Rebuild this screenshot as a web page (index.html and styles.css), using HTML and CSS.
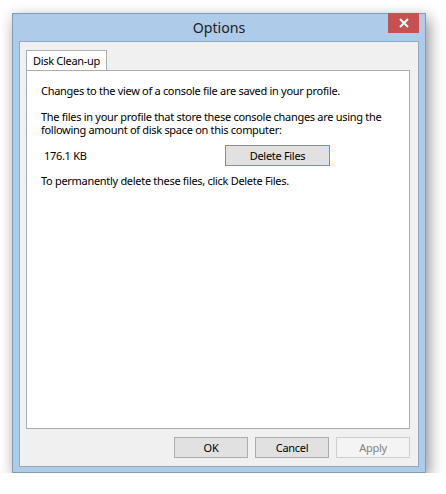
FILE: index.html
```html
<!DOCTYPE html>
<html lang="en">
<head>
  <meta charset="UTF-8" />
  <title>Options</title>
  <link rel="stylesheet" href="styles.css">
</head>
<body>

  <div class="window">
    <div class="titlebar">
      <span class="title">Options</span>
    </div>
    <button class="close" aria-label="Close">
      <svg width="10" height="10" viewBox="0 0 10 10">
        <path d="M1 1 L9 9 M9 1 L1 9" stroke="#fff" stroke-width="2" fill="none"/>
      </svg>
    </button>

    <div class="client">
      <div class="tabs">
        <div class="tab">Disk Clean-up</div>
      </div>

      <div class="panel">
        <p>Changes to the view of a console file are saved in your profile.</p>
        <p>The files in your profile that store these console changes are using the following amount of disk space on this computer:</p>
        <div class="usage">
          <span class="amount">176.1 KB</span>
          <button class="btn btn-default">Delete Files</button>
        </div>
        <p>To permanently delete these files, click Delete Files.</p>
      </div>

      <div class="actions">
        <button class="btn">OK</button>
        <button class="btn">Cancel</button>
        <button class="btn" disabled>Apply</button>
      </div>
    </div>
  </div>

</body>
</html>
```

FILE: styles.css
```css
body {
  margin: 0;
  background: #fff;
  font-family: 'Noto Sans', 'Open Sans', sans-serif;
  font-size: 11px;
  letter-spacing: -0.3px;
  color: #000;
}

.window {
  position: relative;
  box-sizing: border-box;
  width: 414px;
  margin: 13px 0 0 12px;
  padding: 0 6px 5px 6px;
  background: #aecbe9;
  border: 1px solid #7f9cbd;
  box-shadow: 3px 5px 14px rgba(0, 0, 0, 0.45);
}

.titlebar {
  height: 27px;
  display: flex;
  align-items: center;
  justify-content: center;
}

.title {
  font-size: 14.2px;
  letter-spacing: 0;
  color: #222;
}

.close {
  position: absolute;
  top: -1px;
  right: 6px;
  width: 31px;
  height: 20px;
  padding: 0;
  border: none;
  background: #c75050;
  display: flex;
  align-items: center;
  justify-content: center;
}

.client {
  height: 426px;
  box-sizing: border-box;
  display: flex;
  flex-direction: column;
  padding: 8px 8px 8px 6px;
  background: #f0f0f0;
  border: 1px solid #8fa8c6;
}

.tabs {
  display: flex;
}

.tab {
  height: 20px;
  box-sizing: border-box;
  width: 81px;
  padding: 0 6px;
  line-height: 19px;
  background: #fff;
  border: 1px solid #adadad;
  border-bottom: none;
  white-space: nowrap;
}

.panel {
  flex: 1;
  background: #fff;
  border: 1px solid #adadad;
  padding: 13px 14px 0 14px;
}

.panel p {
  margin: 0 0 13px 0;
  line-height: 13px;
}

.usage {
  display: flex;
  align-items: center;
  margin: -4px 0 8px 0;
}

.amount {
  box-sizing: border-box;
  width: 184px;
  padding-left: 3px;
}

.btn {
  height: 21px;
  width: 74px;
  padding: 0;
  font-family: inherit;
  font-size: 11px;
  letter-spacing: -0.3px;
  color: #000;
  background: #e1e1e1;
  border: 1px solid #adadad;
}

.btn-default {
  width: 105px;
  border-color: #4f9be0;
}

.btn:disabled {
  background: #f4f4f4;
  border-color: #cfcfcf;
  color: #838383;
}

.actions {
  display: flex;
  justify-content: flex-end;
  gap: 7px;
  margin-top: 8px;
}
```
